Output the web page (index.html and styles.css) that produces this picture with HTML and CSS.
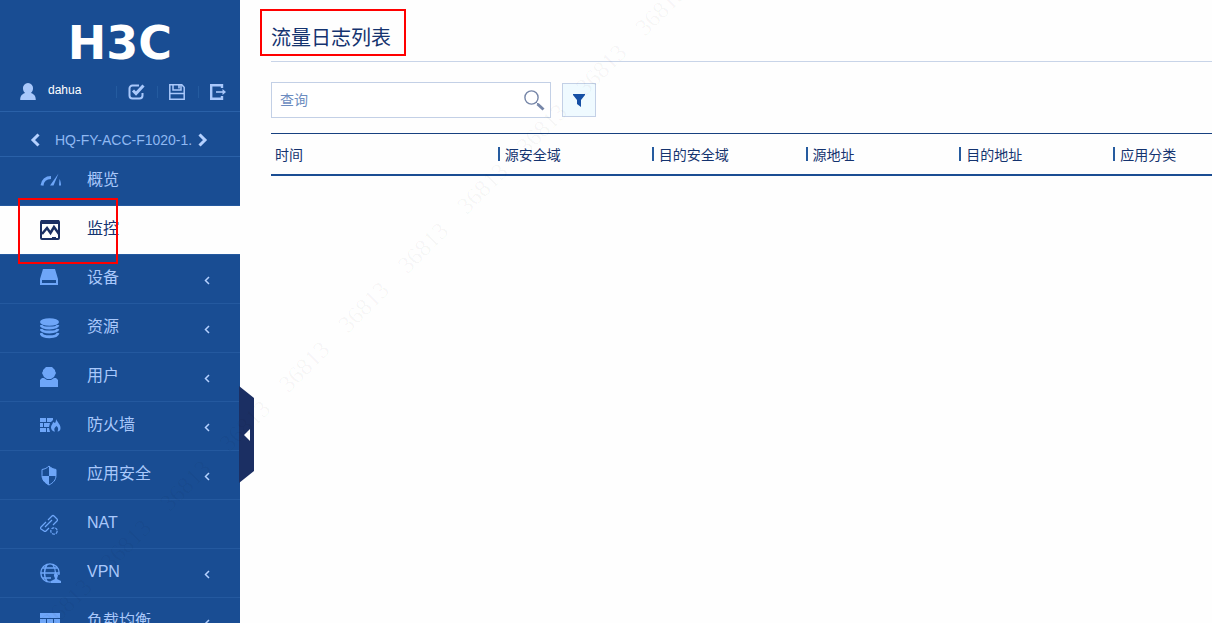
FILE: index.html
```html
<!DOCTYPE html>
<html lang="zh-CN">
<head>
<meta charset="utf-8">
<title>流量日志列表</title>
<link rel="stylesheet" href="styles.css">
</head>
<body>
<div class="app">
  <aside class="sidebar">
    <div class="brand">H3C</div>
    <div class="account">
      <svg class="avatar" width="16" height="17" viewBox="0 0 16 17" fill="currentColor"><path d="M8 0a5 5 0 0 1 5 5.500c0 2.200-1 3.700-2.200 4.500 2.700.8 5 2.500 5 7H.2c0-4.500 2.300-6.200 5-7C4 9.200 3 7.700 3 5.500A5 5 0 0 1 8 0z"/></svg>
      <span class="name">dahua</span>
      <div class="tools">
        <button class="tool" aria-label="检查"><svg width="17" height="16" viewBox="0 0 17 16" fill="none" stroke="currentColor" stroke-width="2"><path d="M11 1.500H4.500a3 3 0 0 0-3 3v7a3 3 0 0 0 3 3h7a3 3 0 0 0 3-3V9"/><path stroke-width="3" d="M5 6.500l3 3 7.500-8"/></svg></button>
        <button class="tool" aria-label="保存"><svg width="16" height="16" viewBox="0 0 16 16" fill="none" stroke="currentColor"><path stroke-width="1.500" d="M.8.8h12l2.400 2.400v12H.8z"/><path stroke-width="1.500" d="M4 1v5h8V1M1 9.500h14"/><path stroke-width="1.600" d="M10 1v3.500"/></svg></button>
        <button class="tool" aria-label="退出"><svg width="17" height="16" viewBox="0 0 17 16" fill="none" stroke="currentColor"><path stroke-width="2.400" d="M12 4V1.200H1.200v13.600H12V12"/><path stroke-width="1.600" d="M6 8h8"/><path fill="currentColor" stroke="none" d="M12.500 5l3.500 3-3.500 3z"/></svg></button>
      </div>
    </div>
    <div class="device">
      <button class="step" aria-label="上一台"><svg width="11" height="14" viewBox="0 0 11 14" fill="none" stroke="currentColor" stroke-width="3"><path d="M8.500 1.500L3 7l5.500 5.500"/></svg></button>
      <span class="device-name">HQ-FY-ACC-F1020-1.</span>
      <button class="step" aria-label="下一台"><svg width="11" height="14" viewBox="0 0 11 14" fill="none" stroke="currentColor" stroke-width="3"><path d="M2.500 1.500L8 7l-5.500 5.500"/></svg></button>
    </div>
    <nav class="menu">
      <a class="item" href="#"><svg class="icon" viewBox="0 0 21 21"><path fill="none" stroke="currentColor" stroke-width="3" d="M2 14.500c.5-5 4-8 9-8"/><path fill="currentColor" d="M18.500 2.500l-5 12H10zM19.500 8c1 1.500 1.500 4 1.500 6.500h-2z"/></svg><span class="label">概览</span></a>
      <a class="item active" href="#"><svg class="icon" viewBox="0 0 21 21"><rect x="1" y="1" width="18" height="18" rx="1" fill="none" stroke="currentColor" stroke-width="2"/><path fill="currentColor" d="M1 0h18v4H1zM12 17h4v3h-4z"/><path fill="none" stroke="currentColor" stroke-width="2.500" d="M2 14l5-6 3.500 5 3.500-6 5 7"/></svg><span class="label">监控</span><span class="mark mark-item"></span></a>
      <a class="item" href="#"><svg class="icon" viewBox="0 0 21 21"><path fill="currentColor" fill-rule="evenodd" d="M3 0h12l3 10v6H0v-6zM2 11v3h14v-3z"/></svg><span class="label">设备</span><svg class="caret" viewBox="0 0 6 9"><path d="M5 1L1.500 4.500 5 8"/></svg></a>
      <a class="item" href="#"><svg class="icon" viewBox="0 0 21 21"><ellipse cx="9.500" cy="4" rx="9.500" ry="3.800" fill="currentColor"/><path fill="none" stroke="currentColor" stroke-width="2.800" d="M1 7c1 4 16 4 17 0M1 11c1 4 16 4 17 0M1 15c1 5 16 5 17 0"/></svg><span class="label">资源</span><svg class="caret" viewBox="0 0 6 9"><path d="M5 1L1.500 4.500 5 8"/></svg></a>
      <a class="item" href="#"><svg class="icon" viewBox="0 0 21 21" fill="currentColor"><path d="M6 0h6l3 3v1l1 2-2 4-3 2H7l-3-2-2-4 1-2V3z"/><path d="M0 13l2-2h2l3 2h4l3-2h2l2 2v7H0z"/></svg><span class="label">用户</span><svg class="caret" viewBox="0 0 6 9"><path d="M5 1L1.500 4.500 5 8"/></svg></a>
      <a class="item" href="#"><svg class="icon" viewBox="0 0 21 21" fill="currentColor"><path d="M0 2h6v4H0zM7 2h6v2l-2 2H7zM0 7h3v4H0zM4 7h6l-1 4H4zM0 12h6v4H0zM7 12h2l1 4H7z"/><path d="M16 3c1 3 4.500 5 4.500 9 0 2-1 3.500-3 3.500 1-2 1-4-1-5.500-2 1.500-3 3.500-1.500 5.500-3 0-4-2.500-4-4.500 0-2 2-3 2-5l2 1c1-1 1-3 1-4z"/></svg><span class="label">防火墙</span><svg class="caret" viewBox="0 0 6 9"><path d="M5 1L1.500 4.500 5 8"/></svg></a>
      <a class="item" href="#"><svg class="icon" viewBox="0 0 21 21"><path fill="none" stroke="currentColor" d="M9 1c2 2 4 3 7 3.500v6C16 15 13 18 9 20c-4-2-7-5-7-9.500v-6C5 4 7 3 9 1z"/><path fill="currentColor" d="M9 1c2 2 4 3 7 3.500V11H9zM2 11h7v9c-4-2-7-5-7-9z"/></svg><span class="label">应用安全</span><svg class="caret" viewBox="0 0 6 9"><path d="M5 1L1.500 4.500 5 8"/></svg></a>
      <a class="item" href="#"><svg class="icon" viewBox="0 0 21 21" fill="none" stroke="currentColor" stroke-width="1.200"><path d="M8 6l4-4q1-1 2 0l3 3q1 1 0 2l-4 4M6 8l-5 5q-1 1 0 2l3 2q1 1 2 0l3-3M5 13l7-7"/><circle cx="14" cy="17" r="3.200" stroke-dasharray="3 1"/></svg><span class="label">NAT</span></a>
      <a class="item" href="#"><svg class="icon" viewBox="0 0 21 21"><g fill="none" stroke="currentColor" stroke-width="1.300"><circle cx="10" cy="10" r="9.200"/><path d="M1 10h18M3 5h14M3 15h8M7.500 1c-4 5-4 13 0 18M12.500 1c2 3 3 6 3 9"/></g><path fill="#194d93" d="M11 12h10v9H11z"/><path fill="currentColor" d="M15.500 10a2.500 2.500 0 0 1 2 4l-.5 2 4 2v2H11v-2l4-2-.5-2a2.500 2.500 0 0 1 1-4z"/></svg><span class="label">VPN</span><svg class="caret" viewBox="0 0 6 9"><path d="M5 1L1.500 4.500 5 8"/></svg></a>
      <a class="item" href="#"><svg class="icon" viewBox="0 0 21 21" fill="currentColor"><path d="M0 1h20v5H0zM0 7h6v4H0zM7 7h6v4H7zM14 7h6v4h-6zM0 13h20v4H0z"/></svg><span class="label">负载均衡</span><svg class="caret" viewBox="0 0 6 9"><path d="M5 1L1.500 4.500 5 8"/></svg></a>
    </nav>
    <button class="collapse" aria-label="收起菜单"><svg width="6" height="12" viewBox="0 0 6 12"><path fill="#fff" d="M6 0v12L0 6z"/></svg></button>
  </aside>
  <main class="content">
    <header class="page-head"><h1 class="title">流量日志列表<span class="mark mark-title"></span></h1></header>
    <div class="toolbar">
      <div class="search">
        <input class="search-input" type="text" placeholder="查询" aria-label="查询">
        <button class="search-button" aria-label="搜索"><svg width="21" height="21" viewBox="0 0 21 21" fill="none" stroke="currentColor"><circle cx="7.500" cy="7.500" r="6.600" stroke-width="1.400"/><path stroke-width="3" d="M13.500 14l6 5.500"/><path d="M12 12l2 2"/></svg></button>
      </div>
      <button class="filter" aria-label="筛选"><svg width="12" height="13" viewBox="0 0 12 13"><path fill="currentColor" d="M0 0h12v1L8 6v7l-4-3V6L0 1z"/></svg></button>
    </div>
    <table class="log">
      <colgroup><col class="col-time"><col class="col-data"><col class="col-data"><col class="col-data"><col class="col-data"><col></colgroup>
      <thead><tr><th scope="col">时间</th><th scope="col">源安全域</th><th scope="col">目的安全域</th><th scope="col">源地址</th><th scope="col">目的地址</th><th scope="col">应用分类</th></tr></thead>
      <tbody></tbody>
    </table>
  </main>
</div>
<svg class="watermark" aria-hidden="true">
  <text class="on-blue" transform="translate(51 631) rotate(-45)">36813    36813    36813    36813    36813    36813    36813    36813    36813    36813    36813</text>
  <text transform="translate(802 630) rotate(-45)">36813    36813    36813    36813    36813    36813    36813</text>
</svg>
</body>
</html>
```
FILE: styles.css
```css
* { box-sizing: border-box; }

body {
  margin: 0;
  overflow: hidden;
  background: #fefefe;
  color: #14336f;
  font-family: "Liberation Sans", "Noto Sans CJK SC", sans-serif;
  font-size: 14px;
}

button {
  padding: 0;
  border: 0;
  background: none;
  color: inherit;
  cursor: pointer;
}

svg { display: block; }

.app {
  display: flex;
  height: 100vh;
}

.sidebar {
  position: relative;
  flex: 0 0 240px;
  background: #194d93;
  color: #a9c8fb;
}

.brand {
  padding-top: 18px;
  height: 72px;
  color: #fff;
  font: bold 46px/50px "DejaVu Sans", sans-serif;
  text-align: center;
}

.account {
  display: flex;
  align-items: center;
  height: 40px;
  padding: 0 14px 0 20px;
  border-bottom: 1px solid #2a61a8;
}

.name {
  margin-left: 12px;
  padding-bottom: 4px;
  color: #fff;
  font-size: 12px;
}

.tools {
  display: flex;
  margin-left: auto;
}

.tool {
  padding-left: 12px;
  width: 41px;
  height: 16px;
  background: linear-gradient(#245b9f, #245b9f) 0 50% / 1px 12px no-repeat;
}

.tool:last-child { width: 28px; }

.device {
  display: flex;
  align-items: center;
  height: 45px;
  padding: 12px 32px 0 30px;
  border-bottom: 1px solid #2a61a8;
}

.step { color: #b5d1ff; }

.device-name {
  flex: 1;
  padding-left: 14px;
  color: #8fb8f2;
  white-space: nowrap;
}

.menu {
  overflow: hidden;
  height: calc(100vh - 157px);
}

.item {
  position: relative;
  display: flex;
  align-items: center;
  height: 49px;
  padding: 0 30px 3px 40px;
  border-bottom: 1px solid #24599f;
  color: inherit;
  font-size: 16px;
  line-height: 24px;
  text-decoration: none;
}

.icon {
  flex: none;
  width: 21px;
  height: 21px;
  margin-top: 3px;
  color: #6ea6f8;
}

.label { margin-left: 26px; }

.caret {
  width: 6px;
  height: 9px;
  margin: 5px 0 0 auto;
  fill: none;
  stroke: #b5d1ff;
  stroke-width: 1.5;
}

.active {
  background: #fefefe;
  color: #14336f;
}

.active .icon { color: #1b2f63; }

.mark {
  position: absolute;
  border: 2px solid #f00;
  pointer-events: none;
}

.mark-item {
  z-index: 2;
  top: -8px;
  left: 18px;
  width: 100px;
  height: 66px;
}

.collapse {
  position: absolute;
  z-index: 1;
  top: 386px;
  left: 239px;
  display: flex;
  align-items: center;
  width: 15px;
  height: 97px;
  padding-left: 5px;
  background: #1b2f63;
  clip-path: polygon(0 0, 100% 12px, 100% 85px, 0 100%);
}

.content {
  flex: 1;
  min-width: 0;
  padding-left: 31px;
}

.page-head {
  height: 62px;
  padding-top: 22px;
  border-bottom: 1px solid #c8d4e8;
}

.title {
  position: relative;
  margin: 0;
  width: fit-content;
  font-size: 20px;
  font-weight: 400;
  line-height: 32px;
}

.mark-title {
  top: -13px;
  left: -11px;
  right: -15px;
  height: 47px;
}

.toolbar {
  display: flex;
  align-items: center;
  gap: 11px;
  padding: 20px 0 15px;
}

.search {
  display: flex;
  align-items: center;
  width: 280px;
  height: 36px;
  padding-right: 5px;
  border: 1px solid #c3d0e6;
  background: #fff;
}

.search-input {
  flex: 1;
  min-width: 0;
  padding: 0 8px;
  border: 0;
  outline: 0;
  background: none;
  color: #14336f;
  font: 14px/20px "Liberation Sans", "Noto Sans CJK SC", sans-serif;
}

.search-input::placeholder { color: #6c8cc0; }

.search-button { color: #7686a8; }

.filter {
  display: grid;
  place-items: center;
  width: 34px;
  height: 34px;
  border: 1px solid #c3d0e6;
  background: #effaff;
  color: #1650a5;
}

.log {
  width: 100%;
  border-collapse: collapse;
  border-top: 1px solid #174180;
  border-bottom: 2px solid #1a4d93;
  table-layout: fixed;
}

.col-time { width: 24%; }

.col-data { width: 16.35%; }

.log th {
  height: 41px;
  padding: 0 0 0 8px;
  background: linear-gradient(#265b9f, #265b9f) 1px 50% / 2px 14px no-repeat;
  font-weight: 400;
  text-align: left;
  white-space: nowrap;
}

.log th:first-child {
  padding-left: 4px;
  background: none;
}

.watermark {
  position: absolute;
  z-index: 3;
  top: 0;
  left: 0;
  width: 100%;
  height: 100%;
  pointer-events: none;
}

.watermark text {
  fill: #000;
  fill-opacity: 0.02;
  font: 24px "Liberation Serif", serif;
  text-rendering: geometricPrecision;
  white-space: pre;
}

.watermark .on-blue { fill-opacity: 0.04; }
```
